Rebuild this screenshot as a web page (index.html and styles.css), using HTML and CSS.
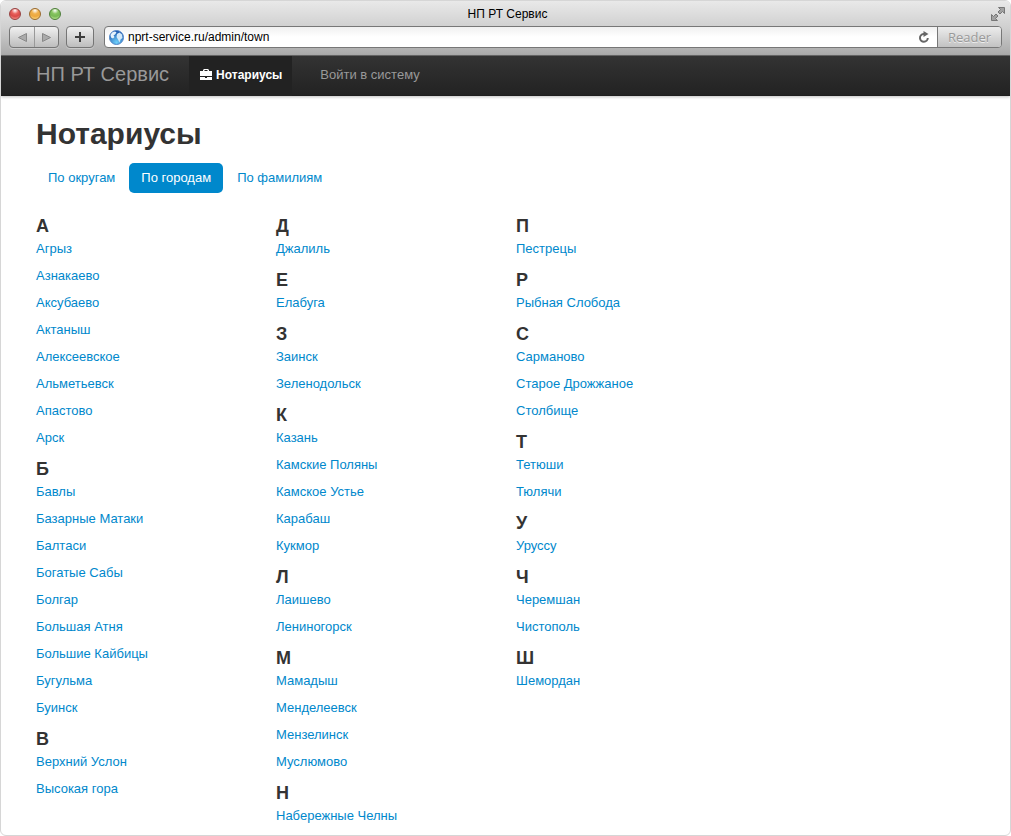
FILE: index.html
```html
<!DOCTYPE html>
<html lang="ru">
<head>
    <meta charset="UTF-8">
    <meta name="viewport" content="width=device-width, initial-scale=1.0">
    <title>НП РТ Сервис</title>
    <link rel="stylesheet" href="styles.css">
</head>
<body>
    <div class="window">
        <!-- Рамка браузера -->
        <header class="chrome">
            <div class="titlebar">
                <div class="lights">
                    <button class="light red" aria-label="Закрыть"></button>
                    <button class="light yellow" aria-label="Свернуть"></button>
                    <button class="light green" aria-label="Развернуть"></button>
                </div>
                <div class="window-title">НП РТ Сервис</div>
                <button class="expand-btn" aria-label="Во весь экран">
                    <svg width="16" height="16" viewBox="0 0 16 16">
                        <path d="M8.500 1.500h6v6l-2-2-2.500 2.500-2-2L10.500 3.500zM1.500 8.500l2 2L6 8l2 2-2.500 2.500 2 2h-6z" fill="#a2a2a2" stroke="#777"/>
                    </svg>
                </button>
            </div>
            <div class="toolbar">
                <div class="tool-group">
                    <button class="tool-btn" aria-label="Назад">
                        <svg width="9" height="9" viewBox="0 0 9 9"><path d="M8.500 .5v8L.5 4.500z" fill="#aaa" stroke="#888"/></svg>
                    </button>
                    <button class="tool-btn" aria-label="Вперёд">
                        <svg width="9" height="9" viewBox="0 0 9 9"><path d="M.5 .5v8l8-4z" fill="#aaa" stroke="#888"/></svg>
                    </button>
                </div>
                <div class="tool-group">
                    <button class="tool-btn plus-btn" aria-label="Добавить">
                        <svg width="10" height="10" viewBox="0 0 10 10"><path d="M4 0h2v4h4v2H6v4H4V6H0V4h4z" fill="#3c3c3c"/></svg>
                    </button>
                </div>
                <div class="address">
                    <svg width="15" height="15" viewBox="0 0 15 15">
                        <defs>
                            <radialGradient id="globe" cx="50%" cy="85%" r="80%">
                                <stop offset="0" stop-color="#6fd0fa"/>
                                <stop offset="1" stop-color="#1c57ae"/>
                            </radialGradient>
                        </defs>
                        <circle cx="7.500" cy="7.500" r="7" fill="url(#globe)" stroke="#5488c8"/>
                        <path d="M1.500 5L3 2.500 6 1.500 7.500 2.500 6 4.500 4.500 5.500 5.500 7 4 8.500 2 7.500z" fill="#e6f3fc"/>
                        <path d="M8 4l2.500-1.500L13 4.500l.5 3.500-2 1.500-1 3-1.500-3L7.500 7z" fill="#d3e9f9"/>
                    </svg>
                    <input type="text" class="address-input" aria-label="Адрес" value="nprt-service.ru/admin/town">
                    <button class="reload-btn" aria-label="Обновить">
                        <svg width="12" height="12" viewBox="0 0 12 12">
                            <path d="M6.500 3H5.500A3.900 3.900 0 1 0 9.800 7" fill="none" stroke="#666" stroke-width="2"/>
                            <path d="M5.500 0L10.500 3l-5 3z" fill="#666"/>
                        </svg>
                    </button>
                    <button class="reader-btn">Reader</button>
                </div>
            </div>
        </header>

        <!-- Верхнее меню сайта -->
        <nav class="navbar">
            <a class="brand" href="#">НП РТ Сервис</a>
            <a class="nav-link active" href="#">
                <svg width="12" height="11" viewBox="0 0 12 11">
                    <path d="M4 0h4l1 1v1h3v5H0V2h3V1zM4.500 1v1h3V1zM0 8h5v1h2V8h5v3H0z" fill="#fff" fill-rule="evenodd"/>
                </svg>
                Нотариусы
            </a>
            <a class="nav-link login" href="#">Войти в систему</a>
        </nav>

        <main class="content">
            <h1>Нотариусы</h1>
            <ul class="pills">
                <li><a href="#">По округам</a></li>
                <li><a class="active" href="#">По городам</a></li>
                <li><a href="#">По фамилиям</a></li>
            </ul>

            <!-- Города по алфавиту -->
            <div class="row">
                <div class="column">
                    <h3>А</h3>
                    <p><a href="#">Агрыз</a></p>
                    <p><a href="#">Азнакаево</a></p>
                    <p><a href="#">Аксубаево</a></p>
                    <p><a href="#">Актаныш</a></p>
                    <p><a href="#">Алексеевское</a></p>
                    <p><a href="#">Альметьевск</a></p>
                    <p><a href="#">Апастово</a></p>
                    <p><a href="#">Арск</a></p>
                    <h3>Б</h3>
                    <p><a href="#">Бавлы</a></p>
                    <p><a href="#">Базарные Матаки</a></p>
                    <p><a href="#">Балтаси</a></p>
                    <p><a href="#">Богатые Сабы</a></p>
                    <p><a href="#">Болгар</a></p>
                    <p><a href="#">Большая Атня</a></p>
                    <p><a href="#">Большие Кайбицы</a></p>
                    <p><a href="#">Бугульма</a></p>
                    <p><a href="#">Буинск</a></p>
                    <h3>В</h3>
                    <p><a href="#">Верхний Услон</a></p>
                    <p><a href="#">Высокая гора</a></p>
                </div>
                <div class="column">
                    <h3>Д</h3>
                    <p><a href="#">Джалиль</a></p>
                    <h3>Е</h3>
                    <p><a href="#">Елабуга</a></p>
                    <h3>З</h3>
                    <p><a href="#">Заинск</a></p>
                    <p><a href="#">Зеленодольск</a></p>
                    <h3>К</h3>
                    <p><a href="#">Казань</a></p>
                    <p><a href="#">Камские Поляны</a></p>
                    <p><a href="#">Камское Устье</a></p>
                    <p><a href="#">Карабаш</a></p>
                    <p><a href="#">Кукмор</a></p>
                    <h3>Л</h3>
                    <p><a href="#">Лаишево</a></p>
                    <p><a href="#">Лениногорск</a></p>
                    <h3>М</h3>
                    <p><a href="#">Мамадыш</a></p>
                    <p><a href="#">Менделеевск</a></p>
                    <p><a href="#">Мензелинск</a></p>
                    <p><a href="#">Муслюмово</a></p>
                    <h3>Н</h3>
                    <p><a href="#">Набережные Челны</a></p>
                </div>
                <div class="column">
                    <h3>П</h3>
                    <p><a href="#">Пестрецы</a></p>
                    <h3>Р</h3>
                    <p><a href="#">Рыбная Слобода</a></p>
                    <h3>С</h3>
                    <p><a href="#">Сарманово</a></p>
                    <p><a href="#">Старое Дрожжаное</a></p>
                    <p><a href="#">Столбище</a></p>
                    <h3>Т</h3>
                    <p><a href="#">Тетюши</a></p>
                    <p><a href="#">Тюлячи</a></p>
                    <h3>У</h3>
                    <p><a href="#">Уруссу</a></p>
                    <h3>Ч</h3>
                    <p><a href="#">Черемшан</a></p>
                    <p><a href="#">Чистополь</a></p>
                    <h3>Ш</h3>
                    <p><a href="#">Шемордан</a></p>
                </div>
            </div>
        </main>
    </div>
</body>
</html>
```
FILE: styles.css
```css
* {
    box-sizing: border-box;
}
body {
    margin: 0;
    background: #fff;
    color: #333;
    font-family: "Liberation Sans", Arial, sans-serif;
    font-size: 13px;
    line-height: 18px;
}
h1, h3, p, ul {
    margin: 0;
    padding: 0;
}
a {
    color: #0088cc;
    text-decoration: none;
}
button, input {
    padding: 0;
    border: 0;
    background: none;
    font-family: inherit;
}
svg {
    display: block;
    flex: none;
}
.window {
    min-height: 100vh;
    border: 1px solid #d6d6d6;
    border-radius: 6px;
    overflow: hidden;
}

/* Рамка браузера */
.chrome {
    height: 55px;
    background: linear-gradient(#e9e9e9, #cfcfcf 50%, #a9a9a9);
    border-bottom: 1px solid #686868;
}
.titlebar {
    display: grid;
    grid-template-columns: 1fr auto 1fr;
    align-items: center;
    height: 25px;
    padding: 0 4px 0 8px;
}
.lights {
    display: flex;
    gap: 8px;
}
.light {
    width: 12px;
    height: 12px;
    border: 1px solid;
    border-radius: 50%;
}
.red {
    border-color: #97403f;
    background: radial-gradient(circle at 50% 15%, #fff 0, #e8605c 35%, #d94a48 60%, #ffa9a0 100%);
}
.yellow {
    border-color: #9a6a2c;
    background: radial-gradient(circle at 50% 15%, #fff 0, #f0b04c 35%, #eda83f 60%, #ffe79a 100%);
}
.green {
    border-color: #4c7e38;
    background: radial-gradient(circle at 50% 15%, #fff 0, #86c45f 35%, #78b955 60%, #d0f5a5 100%);
}
.window-title {
    color: #000;
    font-size: 12px;
}
.expand-btn {
    justify-self: end;
}
.toolbar {
    display: flex;
    gap: 7px;
    padding: 0 8px;
}
.tool-group {
    display: flex;
    height: 22px;
    border: 1px solid #757575;
    border-radius: 4px;
    background: linear-gradient(#f0f0f0, #bdbdbd);
    box-shadow: 0 1px 0 rgba(255, 255, 255, 0.3);
}
.tool-btn {
    display: flex;
    align-items: center;
    justify-content: center;
    width: 24px;
}
.tool-btn + .tool-btn {
    border-left: 1px solid #999;
}
.plus-btn {
    width: 26px;
}
.address {
    display: flex;
    flex: 1;
    align-items: center;
    height: 22px;
    margin-left: 3px;
    padding-left: 4px;
    border: 1px solid #777;
    border-radius: 4px;
    background: linear-gradient(#f0f0f0, #fff 50%);
    overflow: hidden;
}
.address-input {
    flex: 1;
    min-width: 0;
    padding-left: 4px;
    color: #000;
    font-size: 12px;
}
.reload-btn {
    margin-right: 7px;
}
.reader-btn {
    width: 64px;
    height: 20px;
    border-left: 1px solid #777;
    background: linear-gradient(#ececec, #c2c2c2);
    color: #999;
    font-family: "Open Sans", sans-serif;
    font-size: 13px;
    line-height: 18px;
    text-shadow: 0 1px 0 #eee;
}

/* Верхнее меню */
.navbar {
    display: flex;
    height: 40px;
    padding: 0 35px;
    background: linear-gradient(#333, #222);
    box-shadow: 0 1px 3px rgba(0, 0, 0, 0.25), inset 0 -1px 0 rgba(0, 0, 0, 0.1);
    line-height: 36px;
}
.brand {
    margin-right: 20px;
    color: #999;
    font-size: 20px;
}
.nav-link {
    display: flex;
    align-items: center;
    gap: 4px;
    padding: 0 10px 3px;
    color: #999;
}
.nav-link.active {
    padding-left: 11px;
    background: #222;
    color: #fff;
    font-weight: bold;
    font-size: 12px;
}
.login {
    margin-left: 18px;
}

/* Содержимое */
.content {
    padding: 20px 35px 0;
}
h1 {
    font-size: 30px;
    line-height: 36px;
}
.pills {
    display: flex;
    gap: 2px;
    padding: 11px 0 20px;
    list-style: none;
}
.pills a {
    display: block;
    padding: 6px 12px;
    border-radius: 5px;
}
.pills .active {
    background: #0088cc;
    color: #fff;
}
.row {
    display: flex;
    gap: 20px;
}
.column {
    width: 220px;
}
h3 {
    font-size: 18px;
    line-height: 27px;
}
p {
    margin-bottom: 9px;
}
p:last-child {
    margin-bottom: 0;
}
```
